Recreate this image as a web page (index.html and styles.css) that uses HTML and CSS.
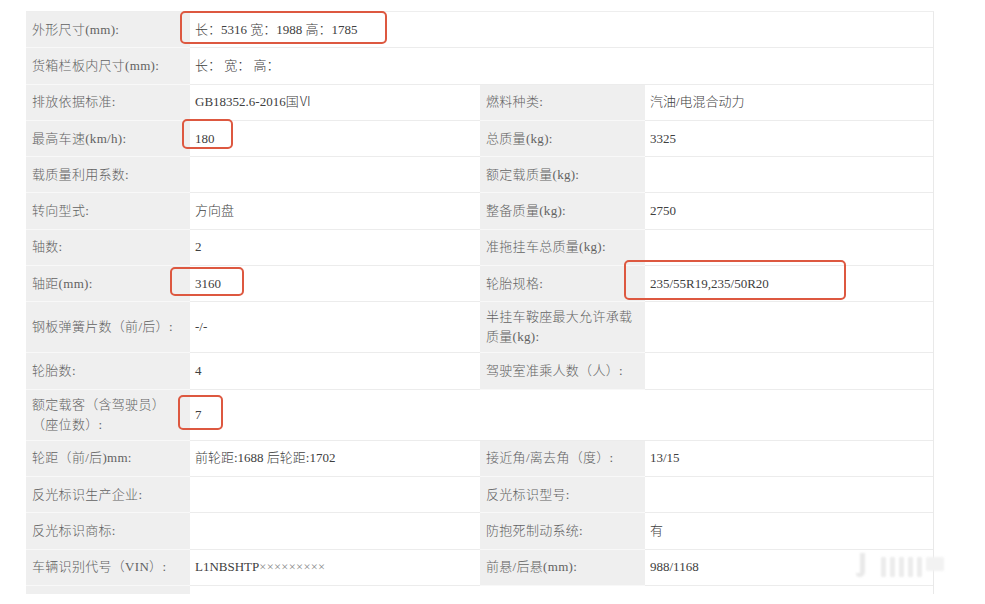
FILE: index.html
```html
<!DOCTYPE html>
<html lang="zh-CN">
<head>
<meta charset="utf-8">
<title>车辆参数</title>
<link rel="stylesheet" href="styles.css">
</head>
<body>
<div class="sheet">
  <div class="row">
    <div class="lab">外形尺寸(mm):</div>
    <div class="val span3"><span class="mark m1"></span>长：5316 宽：1988 高：1785</div>
  </div>
  <div class="row">
    <div class="lab">货箱栏板内尺寸(mm):</div>
    <div class="val span3">长：&nbsp;宽：&nbsp;高：</div>
  </div>
  <div class="row">
    <div class="lab">排放依据标准:</div>
    <div class="val">GB18352.6-2016国Ⅵ</div>
    <div class="lab">燃料种类:</div>
    <div class="val">汽油/电混合动力</div>
  </div>
  <div class="row">
    <div class="lab">最高车速(km/h):</div>
    <div class="val"><span class="mark m2"></span>180</div>
    <div class="lab">总质量(kg):</div>
    <div class="val">3325</div>
  </div>
  <div class="row">
    <div class="lab">载质量利用系数:</div>
    <div class="val"></div>
    <div class="lab">额定载质量(kg):</div>
    <div class="val"></div>
  </div>
  <div class="row">
    <div class="lab">转向型式:</div>
    <div class="val">方向盘</div>
    <div class="lab">整备质量(kg):</div>
    <div class="val">2750</div>
  </div>
  <div class="row">
    <div class="lab">轴数:</div>
    <div class="val">2</div>
    <div class="lab">准拖挂车总质量(kg):</div>
    <div class="val"></div>
  </div>
  <div class="row">
    <div class="lab">轴距(mm):</div>
    <div class="val"><span class="mark m3"></span>3160</div>
    <div class="lab">轮胎规格:</div>
    <div class="val"><span class="mark m4"></span>235/55R19,235/50R20</div>
  </div>
  <div class="row tall">
    <div class="lab">钢板弹簧片数（前/后）:</div>
    <div class="val">-/-</div>
    <div class="lab">半挂车鞍座最大允许承载质量(kg):</div>
    <div class="val"></div>
  </div>
  <div class="row">
    <div class="lab">轮胎数:</div>
    <div class="val">4</div>
    <div class="lab">驾驶室准乘人数（人）:</div>
    <div class="val"></div>
  </div>
  <div class="row tall">
    <div class="lab">额定载客（含驾驶员）（座位数）:</div>
    <div class="val span3"><span class="mark m5"></span>7</div>
  </div>
  <div class="row">
    <div class="lab">轮距（前/后)mm:</div>
    <div class="val">前轮距:1688 后轮距:1702</div>
    <div class="lab">接近角/离去角（度）:</div>
    <div class="val">13/15</div>
  </div>
  <div class="row">
    <div class="lab">反光标识生产企业:</div>
    <div class="val"></div>
    <div class="lab">反光标识型号:</div>
    <div class="val"></div>
  </div>
  <div class="row">
    <div class="lab">反光标识商标:</div>
    <div class="val"></div>
    <div class="lab">防抱死制动系统:</div>
    <div class="val">有</div>
  </div>
  <div class="row">
    <div class="lab">车辆识别代号（VIN）:</div>
    <div class="val">L1NBSHTP<span class="mask">×××××××××</span></div>
    <div class="lab">前悬/后悬(mm):</div>
    <div class="val">988/1168</div>
  </div>
  <div class="row cut">
    <div class="lab"></div>
    <div class="val span3"></div>
  </div>
  <div class="watermark"><span class="hook"></span><span></span><span></span><span></span><span></span><span></span><span class="tail"></span></div>
</div>
</body>
</html>
```

FILE: styles.css
```css
html, body {
  margin: 0;
  padding: 0;
  background: #ffffff;
}

body {
  font-family: "Liberation Serif", "Noto Sans CJK SC", serif;
  font-size: 13px;
  font-weight: 300;
  color: #3a3a3a;
}

.sheet {
  position: relative;
  margin: 11px 0 0 26px;
  width: 908px;
  border-top: 1px solid #eeeeee;
  border-right: 1px solid #e9e9e9;
  box-sizing: border-box;
}

.row {
  display: grid;
  grid-template-columns: 164px 290px 165px 288px;
  height: 36.3px;
}

.row.tall {
  height: 51px;
}

.row.cut {
  height: 8px;
}

.lab,
.val {
  display: flex;
  align-items: center;
  box-sizing: border-box;
  padding: 0 6px;
  line-height: 20px;
}

.lab {
  background: #efefef;
  color: #626262;
  border-bottom: 1px solid #f8f8f8;
  letter-spacing: 0.3px;
}

.val {
  position: relative;
  background: #ffffff;
  color: #404040;
  border-bottom: 1px solid #ececec;
  padding-left: 5px;
}

.row.cut .lab,
.row.cut .val {
  border-bottom: none;
}

.span3 {
  grid-column: 2 / 5;
}

.mask {
  color: #8a8a8a;
  font-size: 12.5px;
  letter-spacing: 0.3px;
}

.mark {
  position: absolute;
  border: 2px solid #dd5840;
  border-radius: 5px;
  box-sizing: border-box;
  z-index: 2;
}

.m1 { left: -10px; top: -1px; width: 207px; height: 33px; }
.m2 { left: -8px; top: -2px; width: 51px; height: 30px; }
.m3 { left: -20px; top: 1px; width: 74px; height: 29px; }
.m4 { left: -21px; top: -6px; width: 222px; height: 40px; }
.m5 { left: -12px; top: 5px; width: 45px; height: 35px; }

.watermark {
  position: absolute;
  left: 830px;
  top: 539px;
  display: flex;
  align-items: flex-end;
  gap: 4px;
  height: 26px;
  filter: blur(0.8px);
}

.watermark span {
  display: block;
  width: 5px;
  height: 20px;
  background: #ececec;
  border-radius: 1px;
}

.watermark span.hook {
  width: 9px;
  height: 24px;
  background: transparent;
  border-right: 5px solid #e9e9e9;
  border-bottom: 4px solid #e9e9e9;
  border-radius: 0 0 8px 6px;
  box-sizing: border-box;
  margin-right: 12px;
}

.watermark span.tail {
  width: 18px;
  height: 14px;
  margin-bottom: 6px;
  background: #f2f2f2;
}
```
